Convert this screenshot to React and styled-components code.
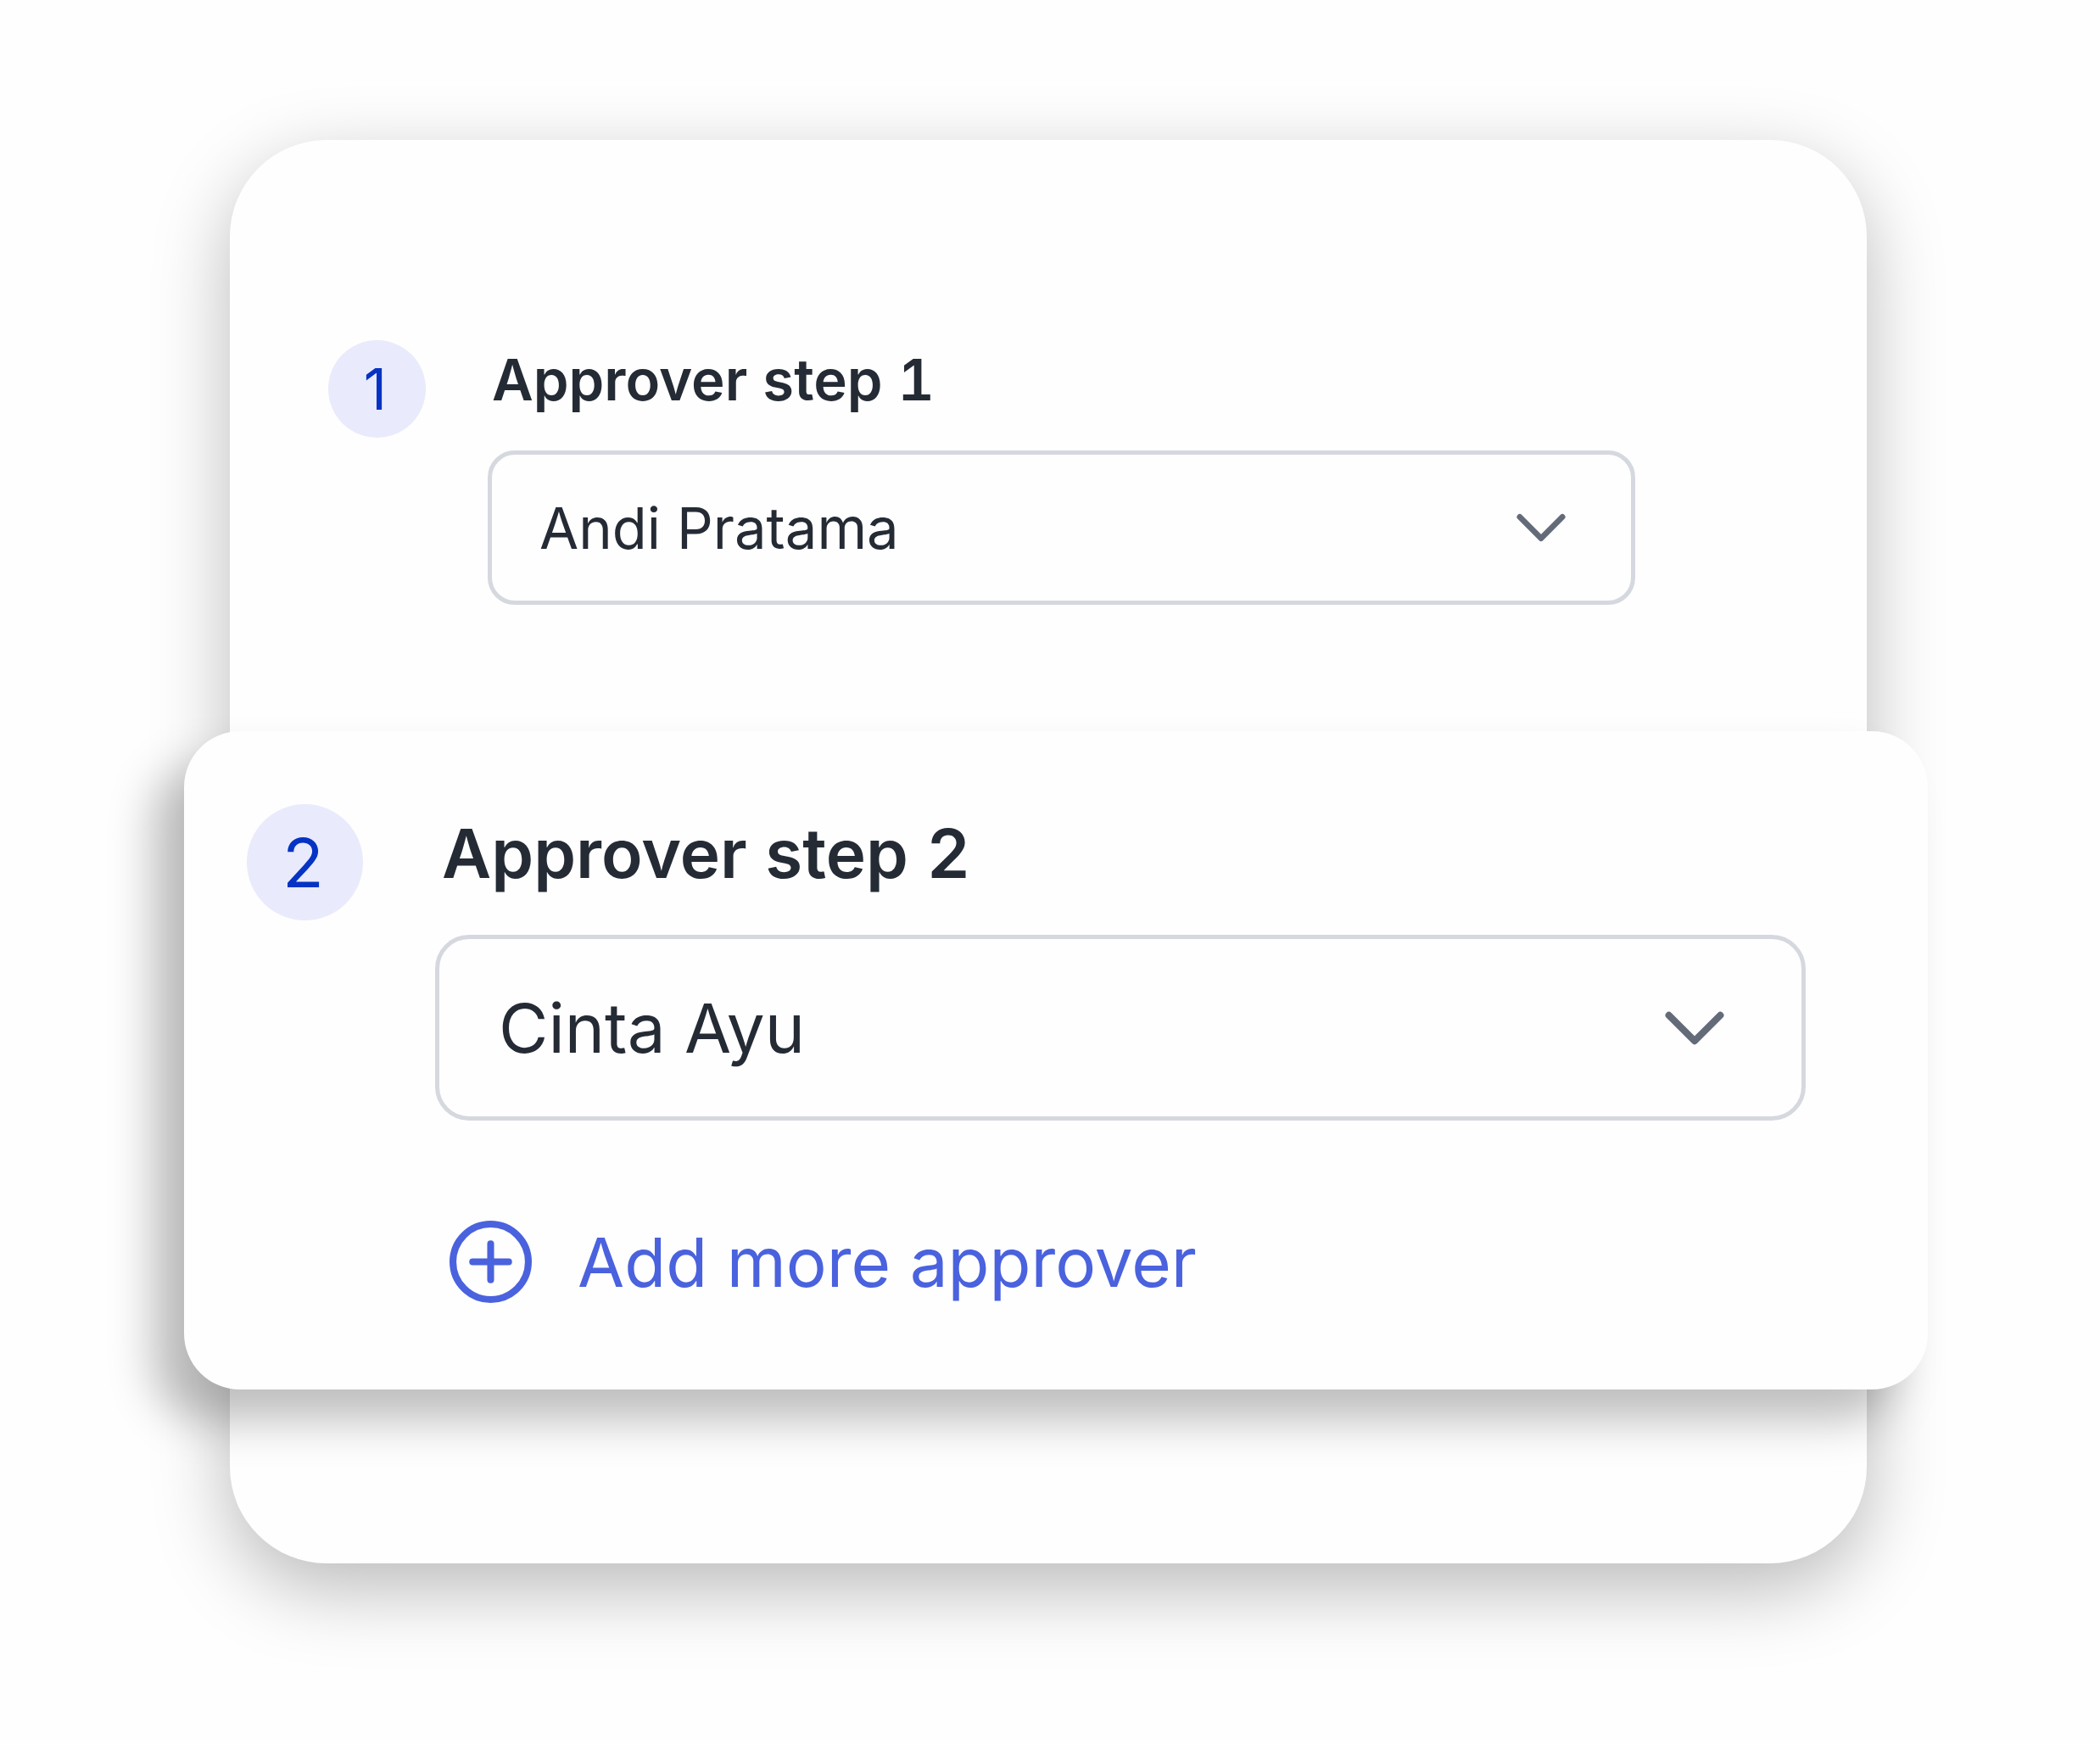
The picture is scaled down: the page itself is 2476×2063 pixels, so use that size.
import React, { useState } from "react";
import styled, { createGlobalStyle } from "styled-components";

const GlobalStyle = createGlobalStyle`
	* {
		box-sizing: border-box;
	}
	body {
		margin: 0;
		background-color: #fefefe;
		font-family: Inter, "Liberation Sans", sans-serif;
		font-optical-sizing: none;
	}
`;

const sizes = {
	small: {
		font: 67,
		badge: 115,
		gap: 73,
		line: 94,
		space: 36,
		inset: 5,
		field: 182,
		radius: 32,
		left: 56,
		right: 82,
		arrow: 58,
	},
	large: {
		font: 80,
		badge: 137,
		gap: 85,
		line: 116,
		space: 38,
		inset: 8,
		field: 219,
		radius: 40,
		left: 70,
		right: 96,
		arrow: 70,
	},
};

const Page = styled.main`
	min-height: 100vh;
	padding: 165px 275px 220px 271px;
`;

const Panel = styled.section`
	padding: 236px 0 205px;
	border-radius: 114px;
	background-color: #fefefe;
	box-shadow: 0 30px 90px rgba(0, 0, 0, 0.27);
`;

const PanelBody = styled.div`
	padding: 0 273px 149px 116px;
`;

const ActiveCard = styled.div`
	margin: 0 -72px 0 -54px;
	padding: 86px 144px 101px 74px;
	border-radius: 66px;
	background-color: #fefefe;
	box-shadow: -37px 37px 52px rgba(0, 0, 0, 0.25);
`;

const Step = styled.div`
	display: flex;
	align-items: flex-start;
	gap: ${(props) => props.$size.gap}px;
	font-size: ${(props) => props.$size.font}px;
`;

const Badge = styled.span`
	display: flex;
	flex-shrink: 0;
	align-items: center;
	justify-content: center;
	width: ${(props) => props.$size.badge}px;
	height: ${(props) => props.$size.badge}px;
	padding-right: 4px;
	border-radius: 50%;
	background-color: #e9eafb;
	color: #0533c4;
`;

const Details = styled.div`
	flex: 1;
	min-width: 0;
`;

const Title = styled.label`
	display: block;
	margin-bottom: ${(props) => props.$size.space}px;
	padding-left: ${(props) => props.$size.inset}px;
	color: #252b35;
	font-weight: 600;
	font-variant-numeric: tabular-nums;
	line-height: ${(props) => props.$size.line}px;
`;

const Field = styled.div`
	position: relative;
`;

const Select = styled.select`
	display: block;
	width: 100%;
	height: ${(props) => props.$size.field}px;
	padding: 0 ${(props) => props.$size.left}px;
	border: 5px solid #d5d8de;
	border-radius: ${(props) => props.$size.radius}px;
	background-color: #fefefe;
	color: #252b35;
	font: inherit;
	appearance: none;
	cursor: pointer;
`;

const Arrow = styled.svg`
	position: absolute;
	top: 50%;
	right: ${(props) => props.$size.right}px;
	width: ${(props) => props.$size.arrow}px;
	transform: translateY(-50%);
	pointer-events: none;
`;

const AddButton = styled.button`
	display: flex;
	align-items: center;
	gap: 53px;
	margin: 117px 0 0 16px;
	padding: 0;
	border: none;
	background: none;
	color: #4a62de;
	font: inherit;
	line-height: 99px;
	cursor: pointer;
`;

const AddIcon = styled.svg`
	width: 99px;
	height: 99px;
`;

const approvers = ["Andi Pratama", "Cinta Ayu"];

const ApproverStep = ({ number, size, value, children }) => {
	const [approver, setApprover] = useState(value);
	const id = `approver-${number}`;

	return (
		<Step $size={size}>
			<Badge $size={size}>{number}</Badge>
			<Details>
				<Title $size={size} htmlFor={id}>
					Approver step {number}
				</Title>
				<Field>
					<Select
						id={id}
						$size={size}
						value={approver}
						onChange={(e) => setApprover(e.target.value)}
					>
						{approvers.map((name) => (
							<option key={name}>{name}</option>
						))}
					</Select>
					<Arrow
						$size={size}
						viewBox="0 0 60 36"
						fill="none"
						stroke="#646b78"
						strokeWidth="7"
						strokeLinecap="round"
						strokeLinejoin="round"
						aria-hidden="true"
					>
						<path d="M4 5 L30 31 L56 5" />
					</Arrow>
				</Field>
				{children}
			</Details>
		</Step>
	);
};

const App = () => {
	return (
		<>
			<GlobalStyle />
			<Page>
				<Panel>
					<PanelBody>
						<ApproverStep number={1} size={sizes.small} value="Andi Pratama" />
					</PanelBody>
					<ActiveCard>
						<ApproverStep number={2} size={sizes.large} value="Cinta Ayu">
							<AddButton type="button">
								<AddIcon
									viewBox="0 0 98 98"
									fill="none"
									stroke="currentColor"
									strokeWidth="8"
									strokeLinecap="round"
									aria-hidden="true"
								>
									<circle cx="49" cy="49" r="44" />
									<path d="M49 28 V70 M28 49 H70" />
								</AddIcon>
								Add more approver
							</AddButton>
						</ApproverStep>
					</ActiveCard>
				</Panel>
			</Page>
		</>
	);
};

export default App;
